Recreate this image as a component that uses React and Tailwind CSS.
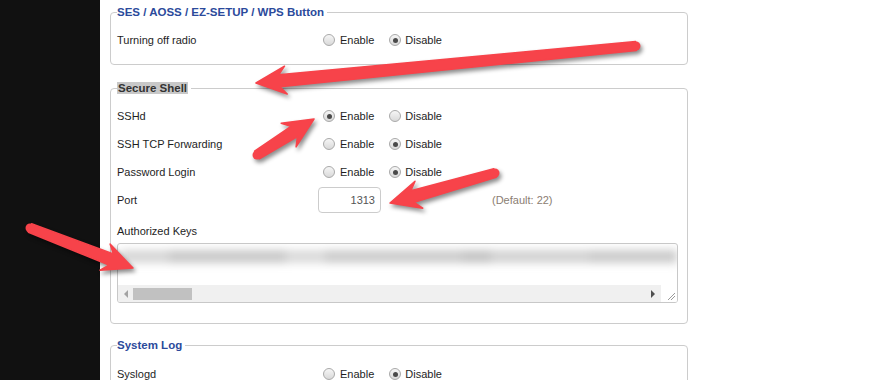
import React from "react";

const font = { fontFamily: '"Liberation Sans", Arial, sans-serif' };

function Radio({ checked }) {
  return (
    <span className="flex h-[12px] w-[12px] items-center justify-center rounded-full border border-[#a9a9a9] bg-gradient-to-b from-[#f6f6f6] to-[#d9d9d9]">
      {checked ? <span className="h-[5px] w-[5px] rounded-full bg-[#4a4a4a]" /> : null}
    </span>
  );
}

function RadioPair({ value }) {
  return (
    <div className="flex items-center pl-[5px]">
      <Radio checked={value === "enable"} />
      <span className="ml-[5px] mr-[15px]">Enable</span>
      <Radio checked={value === "disable"} />
      <span className="ml-[4px]">Disable</span>
    </div>
  );
}

function Row({ label, children }) {
  return (
    <div className="flex h-[28px] items-center">
      <div className="w-[201px] shrink-0">{label}</div>
      {children}
    </div>
  );
}

function Box({ legend, highlight, className, children }) {
  return (
    <fieldset
      className={`w-[578px] rounded-[4px] border border-[#cccccc] px-[6px] ${className}`}
    >
      <legend className="pr-[3px] text-[11.5px] leading-[14px] font-bold">
        {highlight ? (
          <span className="bg-[#c8c8c8] px-[1px] text-[#333333]">{legend}</span>
        ) : (
          <span className="text-[#2b4a9b]">{legend}</span>
        )}
      </legend>
      {children}
    </fieldset>
  );
}

function arrow(tx, ty, px, py) {
  const dx = px - tx;
  const dy = py - ty;
  const len = Math.hypot(dx, dy);
  const ux = dx / len;
  const uy = dy / len;
  const nx = -uy;
  const ny = ux;
  const head = 30;
  const hw = 14;
  const wt = 4.5;
  const ws = 6;
  const p = (x, y) => `${x.toFixed(1)},${y.toFixed(1)}`;
  const bx = px - ux * head;
  const by = py - uy * head;
  const neckX = px - ux * head * 0.78;
  const neckY = py - uy * head * 0.78;
  return {
    points: [
      p(tx + nx * wt, ty + ny * wt),
      p(neckX + nx * ws, neckY + ny * ws),
      p(bx + nx * hw, by + ny * hw),
      p(px, py),
      p(bx - nx * hw, by - ny * hw),
      p(neckX - nx * ws, neckY - ny * ws),
      p(tx - nx * wt, ty - ny * wt),
    ].join(" "),
    cx: tx,
    cy: ty,
    r: wt,
  };
}

const arrows = [
  arrow(636, 46, 256, 83),
  arrow(257, 155, 314, 119),
  arrow(495, 173, 390, 203),
  arrow(30, 228, 133, 268),
];

export default function App() {
  return (
    <div
      className="relative flex h-[380px] w-[894px] overflow-hidden bg-white text-[11px] text-[#1e1e1e]"
      style={font}
    >
      <div className="w-[100px] shrink-0 bg-[#111111]" />
      <div className="flex flex-1 flex-col pl-[10px] pt-[5px]">
        <Box legend="SES / AOSS / EZ-SETUP / WPS Button" className="pt-[7px] pb-[10px]">
          <Row label="Turning off radio">
            <RadioPair value="disable" />
          </Row>
        </Box>

        <Box legend="Secure Shell" highlight className="mt-[16px] pt-[7px] pb-[20px]">
          <Row label="SSHd">
            <RadioPair value="enable" />
          </Row>
          <Row label="SSH TCP Forwarding">
            <RadioPair value="disable" />
          </Row>
          <Row label="Password Login">
            <RadioPair value="disable" />
          </Row>
          <Row label="Port">
            <div className="flex h-[26px] w-[63px] items-center justify-end rounded-[4px] border border-[#cccccc] pr-[5px] text-[#555555]">
              1313
            </div>
            <span className="ml-[111px] text-[#8a7d72]">(Default: 22)</span>
          </Row>
          <div className="mt-[9px] flex h-[16px] items-center">Authorized Keys</div>
          <div className="mt-[4px] flex h-[60px] w-[561px] flex-col overflow-hidden rounded-[3px] border border-[#c8c8c8] bg-white">
            <div className="flex flex-1 items-start overflow-hidden pt-[6px] pl-[2px]">
              <div className="flex h-[13px] w-full blur-[4px]">
                <span className="h-full w-[50px] bg-[#d6d6d6]" />
                <span className="h-full w-[120px] bg-[#c9c9c9]" />
                <span className="h-full w-[40px] bg-[#dadada]" />
                <span className="h-full w-[140px] bg-[#cccccc]" />
                <span className="h-full w-[30px] bg-[#c4c4c4]" />
                <span className="h-full w-[100px] bg-[#d2d2d2]" />
                <span className="h-full w-[90px] bg-[#cbcbcb]" />
              </div>
            </div>
            <div className="flex h-[17px] items-center bg-[#f0f0f0]">
              <span className="ml-[6px] mr-[5px] h-0 w-0 border-y-[4px] border-r-[4px] border-y-transparent border-r-[#a3a3a3]" />
              <span className="h-[12px] w-[59px] bg-[#c1c1c1]" />
              <span className="flex-1" />
              <span className="mr-[6px] h-0 w-0 border-y-[4px] border-l-[4px] border-y-transparent border-l-[#505050]" />
              <span className="flex h-full w-[16px] items-end justify-end bg-white pb-[1px] pr-[1px]">
                <svg width="9" height="9" viewBox="0 0 9 9">
                  <path d="M1 8 L8 1 M4 8 L8 4" stroke="#9a9a9a" strokeWidth="1" />
                </svg>
              </span>
            </div>
          </div>
        </Box>

        <Box legend="System Log" className="mt-[14px] pt-[8px] pb-[10px]">
          <Row label="Syslogd">
            <RadioPair value="disable" />
          </Row>
        </Box>
      </div>

      <svg
        className="pointer-events-none absolute inset-0 drop-shadow-[2px_3px_2px_rgba(0,0,0,0.45)]"
        width="894"
        height="380"
        viewBox="0 0 894 380"
      >
        {arrows.map((a, i) => (
          <g key={i} fill="#f7434a">
            <polygon points={a.points} strokeLinejoin="round" stroke="#f7434a" strokeWidth="1.5" />
            <circle cx={a.cx} cy={a.cy} r={a.r} />
          </g>
        ))}
      </svg>
    </div>
  );
}
